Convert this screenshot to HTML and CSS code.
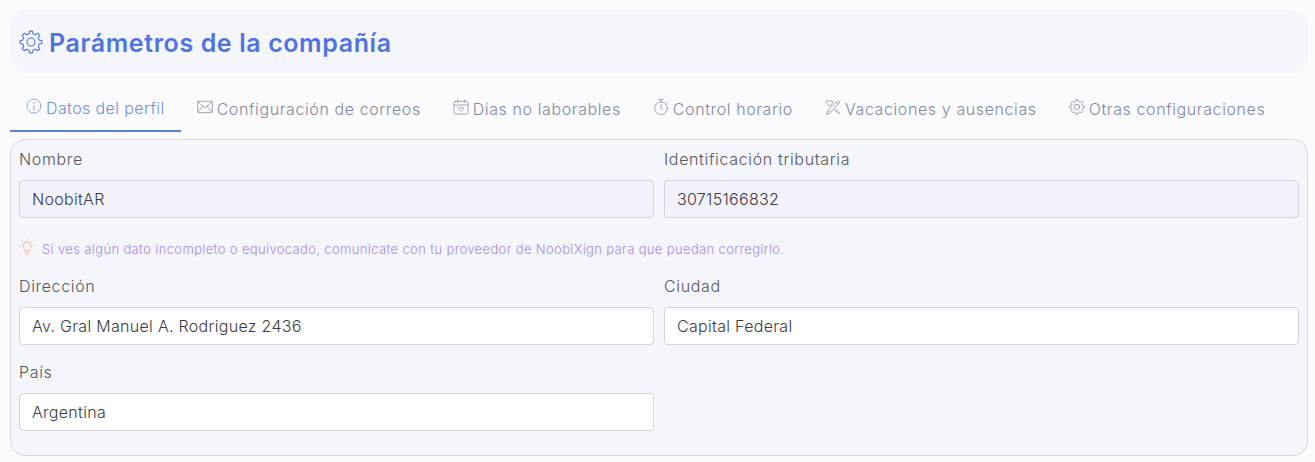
FILE: index.html
```html
<!DOCTYPE html>
<html lang="es">
<head>
  <meta charset="UTF-8">
  <meta name="viewport" content="width=device-width, initial-scale=1.0">
  <title>Parámetros de la compañía</title>
  <link rel="stylesheet" href="styles.css">
</head>
<body>

  <!-- Page title -->
  <div class="page-header">
    <svg class="header-icon" viewBox="0 0 24 24"><polygon points="10.09,3.72 10.47,1.11 13.53,1.11 13.91,3.72 16.5,4.79 18.62,3.21 20.79,5.38 19.21,7.5 20.28,10.09 22.89,10.47 22.89,13.53 20.28,13.91 19.21,16.5 20.79,18.62 18.62,20.79 16.5,19.21 13.91,20.28 13.53,22.89 10.47,22.89 10.09,20.28 7.5,19.21 5.38,20.79 3.21,18.62 4.79,16.5 3.72,13.91 1.11,13.53 1.11,10.47 3.72,10.09 4.79,7.5 3.21,5.38 5.38,3.21 7.5,4.79"/><circle cx="12" cy="12" r="4"/></svg>
    <h1 class="page-title">Parámetros de la compañía</h1>
  </div>

  <!-- Tabs -->
  <div class="tabs">
    <div class="tab active">
      <svg class="tab-icon" viewBox="0 0 24 24"><circle cx="12" cy="12" r="10.5"/><path d="M12 11v6.5M12 6.5v1.5"/></svg>
      <span>Datos del perfil</span>
    </div>
    <div class="tab">
      <svg class="tab-icon" viewBox="0 0 24 24"><rect x="1" y="3.5" width="22" height="17" rx="1.5"/><path d="M1.5 4.5 12 13l10.5-8.5M1.5 19.5 9 10.5M22.5 19.5 15 10.5"/></svg>
      <span>Configuración de correos</span>
    </div>
    <div class="tab">
      <svg class="tab-icon" viewBox="0 0 24 24"><rect x="1.5" y="3.5" width="21" height="19" rx="2"/><path d="M1.5 9h21M7 1v4.5M17 1v4.5M12 18.5l-3.6-3.4c-1.3-1.5 1-3.4 2.4-2l1.2 1 1.2-1c1.4-1.4 3.7.5 2.4 2z"/></svg>
      <span>Días no laborables</span>
    </div>
    <div class="tab">
      <svg class="tab-icon" viewBox="0 0 24 24"><circle cx="12" cy="14" r="9.5"/><path d="M12 8.5V14l3 2M8.5 1h7M12 1v3.5M20 4.5l1.5 1.5"/></svg>
      <span>Control horario</span>
    </div>
    <div class="tab">
      <svg class="tab-icon" viewBox="0 0 24 24"><path d="M3 23l1-5.500L17.500 4l3-1.500 1.500 1.500-1.500 3L7.500 21z"/><path d="M17 5l2.500 2.500M5 17l2.500 2.500"/><path d="M16 15l6 6-1.500 1.500-6-6M9 8.500 7.500 10"/><path d="M6.500 10.500 2.300 6.500C.3 4 3.500.8 5.800 3l1 .9.900-.9c2.300-2 5.300 1 3.400 3.300z"/></svg>
      <span>Vacaciones y ausencias</span>
    </div>
    <div class="tab">
      <svg class="tab-icon" viewBox="0 0 24 24"><polygon points="10.09,3.72 10.47,1.11 13.53,1.11 13.91,3.72 16.5,4.79 18.62,3.21 20.79,5.38 19.21,7.5 20.28,10.09 22.89,10.47 22.89,13.53 20.28,13.91 19.21,16.5 20.79,18.62 18.62,20.79 16.5,19.21 13.91,20.28 13.53,22.89 10.47,22.89 10.09,20.28 7.5,19.21 5.38,20.79 3.21,18.62 4.79,16.5 3.72,13.91 1.11,13.53 1.11,10.47 3.72,10.09 4.79,7.5 3.21,5.38 5.38,3.21 7.5,4.79"/><circle cx="12" cy="12" r="4"/></svg>
      <span>Otras configuraciones</span>
    </div>
  </div>

  <!-- Profile form -->
  <div class="panel">
    <div class="form-row">
      <div class="field">
        <label>Nombre</label>
        <input class="input locked" value="NoobitAR" readonly>
      </div>
      <div class="field">
        <label>Identificación tributaria</label>
        <input class="input locked" value="30715166832" readonly>
      </div>
    </div>

    <div class="hint">
      <svg class="hint-icon" viewBox="0 0 24 24"><path d="M8.500 17c0-2-2.500-3-2.500-6.500a6 6 0 0 1 12 0c0 3.500-2.500 4.500-2.500 6.500z"/><path d="M9.500 20h5M10.500 23h3M12 0v1.500M2 10.500H.5M23.500 10.500H22M4.500 3l1.200 1.200M19.500 3l-1.200 1.200"/></svg>
      <span>Si ves algún dato incompleto o equivocado, comunicate con tu proveedor de NoobiXign para que puedan corregirlo.</span>
    </div>

    <div class="form-row">
      <div class="field">
        <label>Dirección</label>
        <input class="input" value="Av. Gral Manuel A. Rodriguez 2436" readonly>
      </div>
      <div class="field">
        <label>Ciudad</label>
        <input class="input" value="Capital Federal" readonly>
      </div>
    </div>

    <div class="form-row last">
      <div class="field">
        <label>País</label>
        <input class="input" value="Argentina" readonly>
      </div>
    </div>
  </div>

</body>
</html>
```

FILE: styles.css
```css
body {
  margin: 0;
  padding: 10px 7px 0 10px;
  font-family: Inter, "Noto Sans", sans-serif;
  background-color: #fbfbfd;
  color: #55575f;
  overflow: hidden;
}

/* Page title */
.page-header {
  display: flex;
  align-items: center;
  gap: 6px;
  height: 63px;
  padding-left: 9px;
  background-color: #f5f6fc;
  border-radius: 15px;
}

.header-icon {
  width: 24px;
  height: 24px;
  fill: none;
  stroke: #4f74e0;
  stroke-width: 1.1;
  stroke-linejoin: round;
}

.page-title {
  margin: 2px 0 0;
  font-size: 25px;
  font-weight: 600;
  letter-spacing: 0.6px;
  color: #4f74e0;
}

/* Tabs */
.tabs {
  display: flex;
  height: 59px;
  margin-bottom: 7px;
}

.tab {
  display: flex;
  align-items: center;
  gap: 4px;
  box-sizing: border-box;
  height: 59px;
  padding: 12px 16px 0;
  color: #83889f;
  font-size: 16px;
  font-weight: 300;
  letter-spacing: 0.6px;
  white-space: nowrap;
}

.tab.active {
  color: #6c8ee8;
  letter-spacing: 0.4px;
  border-bottom: 2px solid #5b7fdf;
}

.tab-icon {
  width: 16px;
  height: 16px;
  margin-top: -3px;
  fill: none;
  stroke: currentColor;
  stroke-width: 1.1;
  stroke-linejoin: round;
  stroke-linecap: round;
}

/* Form panel */
.panel {
  height: 315px;
  padding: 0 8px;
  background-color: #f5f6fb;
  border: 1px solid #d5d6de;
  border-radius: 15px;
}

.form-row {
  display: grid;
  grid-template-columns: 635px 635px;
  gap: 10px;
  padding-top: 10px;
}

.form-row.last {
  padding-top: 18px;
}

.field label {
  display: block;
  height: 20px;
  margin-bottom: 10px;
  font-size: 16px;
  font-weight: 300;
  letter-spacing: 0.65px;
  line-height: 18px;
}

.input {
  display: block;
  box-sizing: border-box;
  width: 100%;
  height: 38px;
  padding: 0 12px;
  font-family: inherit;
  font-size: 16px;
  font-weight: 300;
  letter-spacing: 0.3px;
  color: #3a3c44;
  background-color: #fff;
  border: 1px solid #d2d3dc;
  border-radius: 4px;
  outline: none;
}

.input.locked {
  background-color: #f3f2fb;
}

/* Hint under the read-only fields */
.hint {
  display: flex;
  align-items: center;
  gap: 7px;
  height: 20px;
  padding: 21px 0 8px;
  color: #a98ae8;
  font-size: 13px;
  font-weight: 300;
  letter-spacing: 0.36px;
}

.hint-icon {
  width: 16px;
  height: 16px;
  margin-top: -5px;
  fill: none;
  stroke: #f0a58c;
  stroke-width: 1.1;
  stroke-linecap: round;
  stroke-linejoin: round;
}
```
